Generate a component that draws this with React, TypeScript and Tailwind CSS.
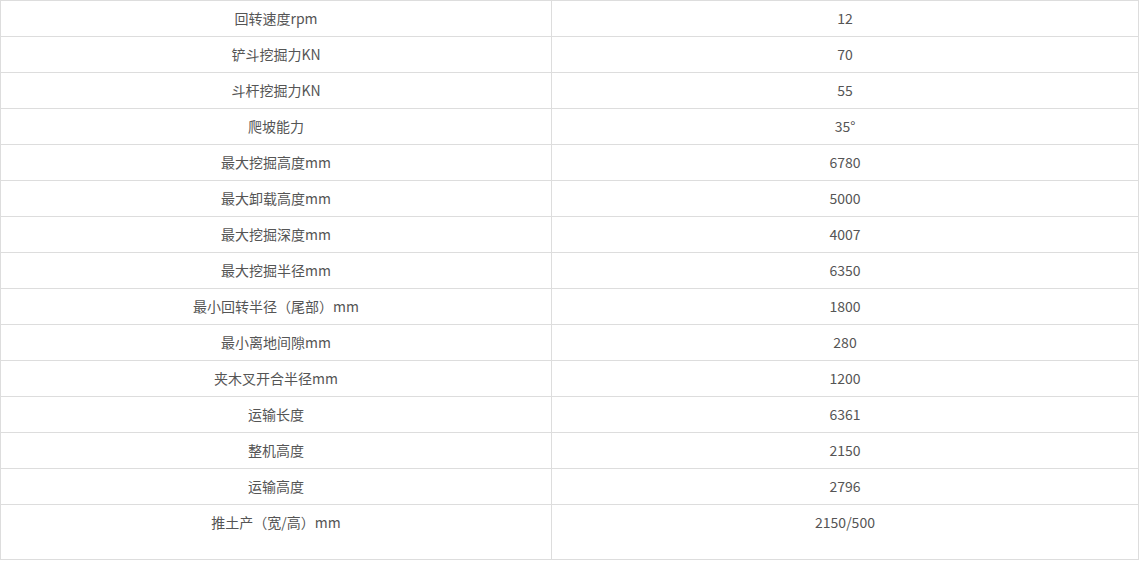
const rows: [string, string][] = [
  ['回转速度rpm', '12'],
  ['铲斗挖掘力KN', '70'],
  ['斗杆挖掘力KN', '55'],
  ['爬坡能力', '35°'],
  ['最大挖掘高度mm', '6780'],
  ['最大卸载高度mm', '5000'],
  ['最大挖掘深度mm', '4007'],
  ['最大挖掘半径mm', '6350'],
  ['最小回转半径（尾部）mm', '1800'],
  ['最小离地间隙mm', '280'],
  ['夹木叉开合半径mm', '1200'],
  ['运输长度', '6361'],
  ['整机高度', '2150'],
  ['运输高度', '2796'],
  ['推土产（宽/高）mm', '2150/500'],
];

const App = () => {
  return (
    <div
      className="w-[1139px] bg-white text-[14px] text-[#555]"
      style={{ fontFamily: '"Microsoft YaHei", "Noto Sans CJK SC", sans-serif' }}
    >
      <div className="border-t border-l border-r border-[#ddd]">
        {rows.map(([label, value], i) => {
          const last = i === rows.length - 1;
          return (
            <div
              key={label}
              className={`flex border-b border-[#ddd] ${last ? 'h-[55px]' : 'h-[36px]'}`}
            >
              <div className="w-[551px] shrink-0 border-r border-[#ddd] text-center leading-[35px]">
                {label}
              </div>
              <div className="flex-1 text-center leading-[35px]">{value}</div>
            </div>
          );
        })}
      </div>
    </div>
  );
};

export default App;
